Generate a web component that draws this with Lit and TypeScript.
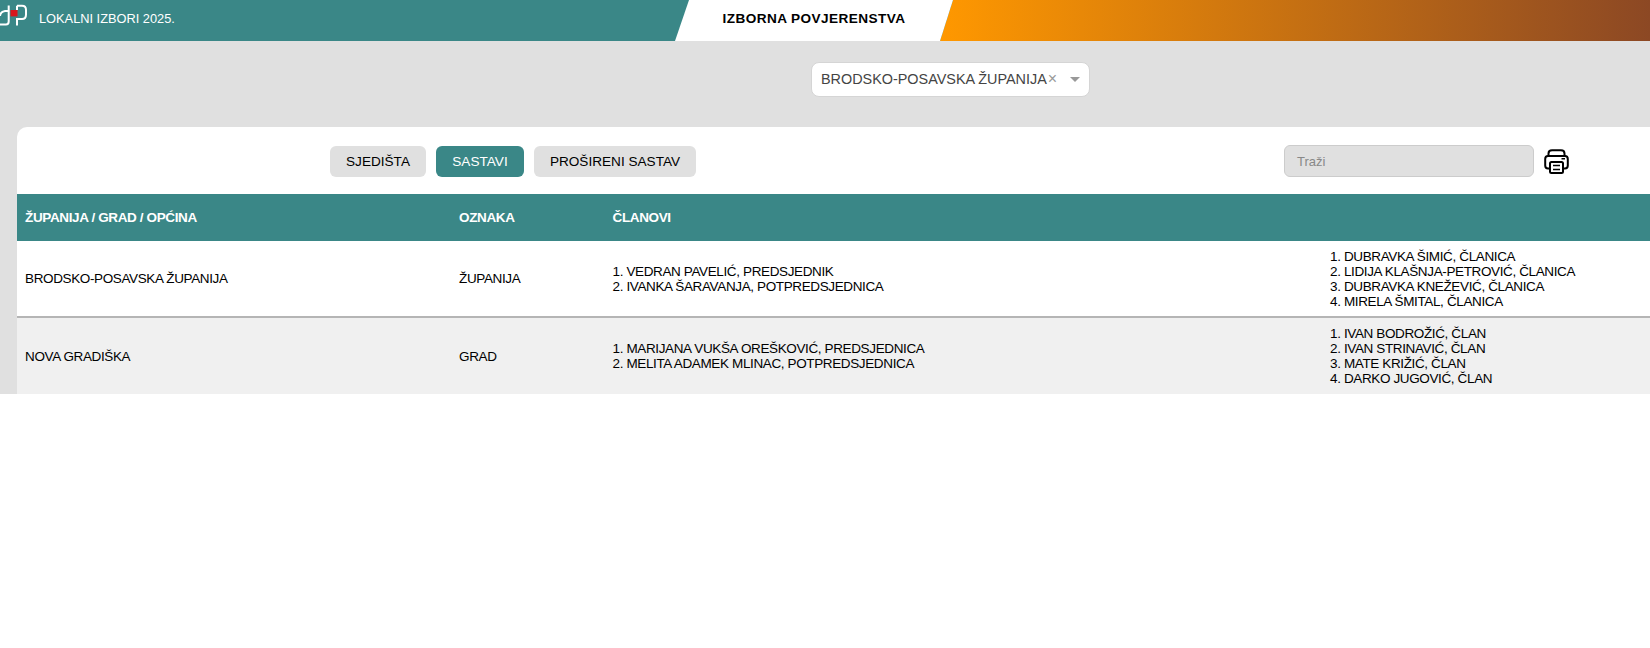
import { LitElement, html, css, svg } from "lit";
import { customElement } from "lit/decorators.js";

const rows = [
  {
    name: "BRODSKO-POSAVSKA ŽUPANIJA",
    kind: "ŽUPANIJA",
    heads: ["1. VEDRAN PAVELIĆ, PREDSJEDNIK", "2. IVANKA ŠARAVANJA, POTPREDSJEDNICA"],
    members: ["1. DUBRAVKA ŠIMIĆ, ČLANICA", "2. LIDIJA KLAŠNJA-PETROVIĆ, ČLANICA", "3. DUBRAVKA KNEŽEVIĆ, ČLANICA", "4. MIRELA ŠMITAL, ČLANICA"],
  },
  {
    name: "NOVA GRADIŠKA",
    kind: "GRAD",
    heads: ["1. MARIJANA VUKŠA OREŠKOVIĆ, PREDSJEDNICA", "2. MELITA ADAMEK MLINAC, POTPREDSJEDNICA"],
    members: ["1. IVAN BODROŽIĆ, ČLAN", "2. IVAN STRINAVIĆ, ČLAN", "3. MATE KRIŽIĆ, ČLAN", "4. DARKO JUGOVIĆ, ČLAN"],
  },
];

const logo = svg`<svg class="logo" width="27" height="36" viewBox="0 0 27 36" fill="none" stroke="#fff" stroke-width="2">
  <path d="M0 16 Q0.5 11.5 5 11 H8.7 M8.7 5.5 V21.5 Q8.7 24.5 6 24.5 H0"/>
  <path d="M17 5.7 V10 M17 5.7 H22 Q26 5.7 26 10 V14.5 Q26 19 22 19 H17 V25.5"/>
  <rect x="10.5" y="10" width="7" height="6.4" fill="#d7161d" stroke="none"/>
</svg>`;

const printer = svg`<svg class="printer" width="25" height="25" viewBox="0 0 25 25" fill="none" stroke="#000" stroke-width="2">
  <path d="M4.5 7 V4.5 Q4.5 1.2 8 1.2 H17 Q20.5 1.2 20.5 4.5 V7"/>
  <path d="M5.5 19.5 H4 Q1.2 19.5 1.2 16.5 V10 Q1.2 7 4 7 H21 Q23.8 7 23.8 10 V16.5 Q23.8 19.5 21 19.5 H19.5"/>
  <rect x="6" y="13" width="13" height="11" rx="1.5"/>
  <path d="M9 16.5 H16 M9 20.5 H16" stroke-width="1.7"/>
  <path d="M17.5 9.8 H21" stroke-width="1.5"/>
</svg>`;

@customElement("app-root")
export class AppRoot extends LitElement {
  static styles = css`
    :host { display: block; font-family: "Liberation Sans", Arial, sans-serif; color: #000; }
    .top { display: flex; height: 41px; background: #3a8787; overflow: hidden; }
    .brand { display: flex; align-items: center; gap: 12px; color: #fff; font-size: 12.8px; flex: 1; height: 36px; align-self: flex-start; }
    .logo { flex: none; }
    .title {
      width: 278px; flex: none; background: #fff; font-size: 13.6px; font-weight: 700; letter-spacing: .43px;
      clip-path: polygon(14px 0, 100% 0, calc(100% - 13px) 100%, 0 100%);
      display: flex; align-items: center; justify-content: center; height: 41px; padding-bottom: 5px; box-sizing: border-box;
      margin-right: -13px; position: relative; z-index: 1;
    }
    .accent {
      width: 710px; flex: none; height: 41px;
      background: linear-gradient(90deg, #ff9800, #8c4824);
      clip-path: polygon(13px 0, 100% 0, 100% 100%, 0 100%);
    }
    .main { background: #e0e0e0; padding: 0 0 0 17px; height: 353px; overflow: hidden; }
    .filter { display: flex; height: 86px; padding-left: 794px; padding-top: 21px; box-sizing: border-box; }
    .select {
      width: 279px; height: 35px; box-sizing: border-box; background: #fff; border: 1px solid #d5d5d5; border-radius: 8px;
      display: flex; align-items: center; padding: 0 0 1px 9px; font-size: 14.4px; color: #444;
    }
    .clear { color: #999; font-size: 16px; margin-left: 1px; }
    .caret { width: 0; height: 0; border-left: 5px solid transparent; border-right: 5px solid transparent; border-top: 5px solid #999; margin-left: 13px; }
    .card { background: #fff; border-radius: 10px 0 0 0; overflow: hidden; height: 267px; }
    .tools { display: flex; align-items: center; height: 67px; padding-top: 1px; box-sizing: border-box; }
    .tabs { display: flex; gap: 10px; margin-left: 313px; width: 366px; flex: none; }
    .tab { border: 0; height: 31px; border-radius: 6px; background: #e0e0e0; font: 13.6px "Liberation Sans", sans-serif; color: #000; padding: 0; }
    .tab.a { width: 96px; }
    .tab.b { width: 88px; background: #3a8787; color: #fff; }
    .tab.c { width: 162px; }
    .search {
      margin-left: 588px; width: 250px; height: 32px; box-sizing: border-box; background: #e0e0e0;
      border: 1px solid #ccc; border-radius: 6px; padding: 0 12px; font: 13px "Liberation Sans", sans-serif; color: #888;
      display: flex; align-items: center;
    }
    .printer { margin-left: 10px; flex: none; }
    .row { display: grid; grid-template-columns: 434px 153.5px 717.5px 1fr; align-items: center; font-size: 13.5px; line-height: 15px; letter-spacing: -.37px; }
    .cell { padding-left: 8px; }
    .head { background: #3a8787; color: #fff; font-weight: 700; height: 47px; }
    .body { height: 77px; box-sizing: border-box; border-bottom: 2px solid #b5b5b5; white-space: nowrap; }
    .body.alt { background: #f0f0f0; border-bottom: 0; height: 76px; }
    .line { display: block; }
  `;

  render() {
    return html`
      <div class="top">
        <div class="brand">${logo}<span>LOKALNI IZBORI 2025.</span></div>
        <div class="title">IZBORNA POVJERENSTVA</div>
        <div class="accent"></div>
      </div>
      <div class="main">
        <div class="filter">
          <div class="select">BRODSKO-POSAVSKA ŽUPANIJA<span class="clear">×</span><span class="caret"></span></div>
        </div>
        <div class="card">
          <div class="tools">
            <div class="tabs">
              <button class="tab a">SJEDIŠTA</button>
              <button class="tab b">SASTAVI</button>
              <button class="tab c">PROŠIRENI SASTAV</button>
            </div>
            <div class="search">Traži</div>
            ${printer}
          </div>
          <div class="row head">
            <div class="cell">ŽUPANIJA / GRAD / OPĆINA</div>
            <div class="cell">OZNAKA</div>
            <div class="cell">ČLANOVI</div>
            <div></div>
          </div>
          ${rows.map(
            (r, i) => html`<div class="row body ${i % 2 ? "alt" : ""}">
              <div class="cell">${r.name}</div>
              <div class="cell">${r.kind}</div>
              <div class="cell">${r.heads.map((t) => html`<span class="line">${t}</span>`)}</div>
              <div class="cell">${r.members.map((t) => html`<span class="line">${t}</span>`)}</div>
            </div>`
          )}
        </div>
      </div>
    `;
  }
}
